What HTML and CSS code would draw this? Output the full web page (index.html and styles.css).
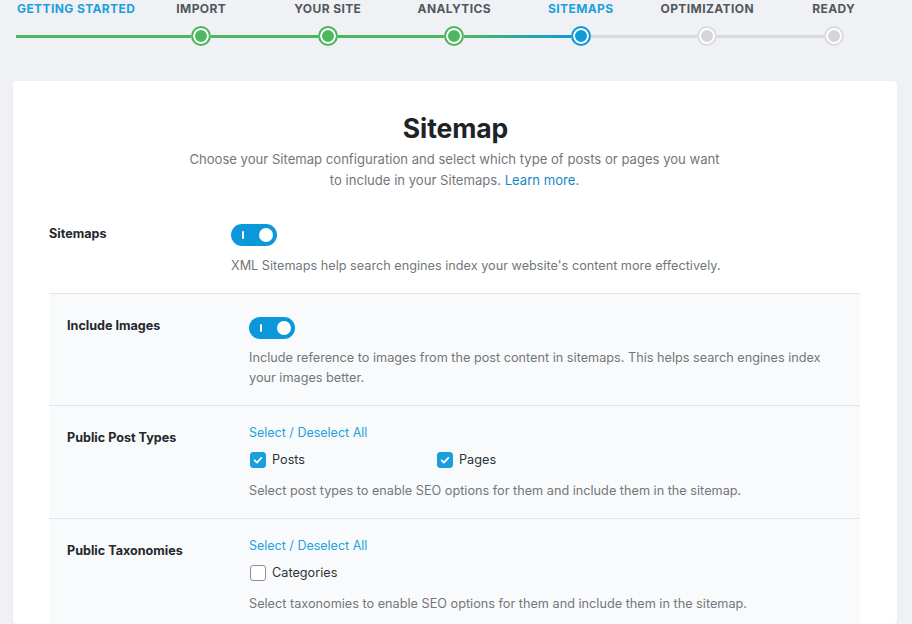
FILE: index.html
```html
<!DOCTYPE html>
<html lang="en">
<head>
<meta charset="utf-8">
<title>Sitemap setup</title>
<link rel="stylesheet" href="styles.css">
</head>
<body>
<nav class="stepper">
  <div class="step-row labels">
    <span class="step-label first active">Getting Started</span>
    <span class="step-label">Import</span>
    <span class="step-label">Your Site</span>
    <span class="step-label">Analytics</span>
    <span class="step-label active">Sitemaps</span>
    <span class="step-label">Optimization</span>
    <span class="step-label">Ready</span>
  </div>
  <div class="step-row track">
    <div class="cell"><span class="seg green"></span></div>
    <div class="cell"><span class="seg green"></span><span class="dot done"></span><span class="seg green"></span></div>
    <div class="cell"><span class="seg green"></span><span class="dot done"></span><span class="seg green"></span></div>
    <div class="cell"><span class="seg green"></span><span class="dot done"></span><span class="seg grad1"></span></div>
    <div class="cell"><span class="seg grad2"></span><span class="dot current"></span><span class="seg grey"></span></div>
    <div class="cell"><span class="seg grey"></span><span class="dot todo"></span><span class="seg grey"></span></div>
    <div class="cell"><span class="seg grey"></span><span class="dot todo"></span><span class="seg none"></span></div>
  </div>
</nav>

<main class="card">
  <h1 class="title">Sitemap</h1>
  <p class="intro">Choose your Sitemap configuration and select which type of posts or pages you want<br>to include in your Sitemaps. <a href="#" class="learn">Learn more.</a></p>

  <div class="row top-row">
    <div class="label">Sitemaps</div>
    <div class="value">
      <span class="toggle"><span class="bar"></span><span class="knob"></span></span>
      <p class="desc">XML Sitemaps help search engines index your website's content more effectively.</p>
    </div>
  </div>

  <section class="panel">
    <div class="row">
      <div class="label">Include Images</div>
      <div class="value">
        <span class="toggle"><span class="bar"></span><span class="knob"></span></span>
        <p class="desc">Include reference to images from the post content in sitemaps. This helps search engines index your images better.</p>
      </div>
    </div>
    <div class="row">
      <div class="label">Public Post Types</div>
      <div class="value">
        <a href="#" class="select-all">Select / Deselect All</a>
        <div class="checks">
          <label class="check"><span class="box on"><svg viewBox="0 0 16 16" width="16" height="16"><path d="M4.2 8.3l2.6 2.6 5-5.4" fill="none" stroke="#fff" stroke-width="2" stroke-linecap="round" stroke-linejoin="round"/></svg></span>Posts</label>
          <label class="check"><span class="box on"><svg viewBox="0 0 16 16" width="16" height="16"><path d="M4.2 8.3l2.6 2.6 5-5.4" fill="none" stroke="#fff" stroke-width="2" stroke-linecap="round" stroke-linejoin="round"/></svg></span>Pages</label>
        </div>
        <p class="desc">Select post types to enable SEO options for them and include them in the sitemap.</p>
      </div>
    </div>
    <div class="row">
      <div class="label">Public Taxonomies</div>
      <div class="value">
        <a href="#" class="select-all">Select / Deselect All</a>
        <div class="checks">
          <label class="check"><span class="box"></span>Categories</label>
        </div>
        <p class="desc">Select taxonomies to enable SEO options for them and include them in the sitemap.</p>
      </div>
    </div>
  </section>
</main>
</body>
</html>
```

FILE: styles.css
```css
* { box-sizing: border-box; }

html, body {
  margin: 0;
  padding: 0;
}

body {
  background: #f0f1f4;
  font-family: "Inter", "Noto Sans", sans-serif;
  color: #1d2327;
  height: 624px;
  overflow: hidden;
}

.stepper {
  padding: 1px 0 0 16px;
}

.step-row {
  display: grid;
  grid-template-columns: 122px repeat(6, 126.5px);
}

.step-label {
  font-size: 12px;
  font-weight: 700;
  letter-spacing: 0.4px;
  text-transform: uppercase;
  color: #50575e;
  text-align: center;
  line-height: 16px;
}

.step-label.first { text-align: left; padding-left: 1px; }
.step-label.active { color: #1ba0dd; }

.track {
  margin-top: 9px;
  height: 20px;
}

.cell {
  display: flex;
  align-items: center;
}

.seg {
  flex: 1;
  height: 3px;
}

.seg.green { background: #4db85f; }
.seg.grey { background: #d8dadd; }
.seg.none { background: transparent; }
.seg.grad1 { background: linear-gradient(90deg, #4db85f, #2aa9a0); }
.seg.grad2 { background: linear-gradient(90deg, #2aa9a0, #0f9ad8); }

.dot {
  width: 20px;
  height: 20px;
  border-radius: 50%;
  border: 2px solid #4db85f;
  box-shadow: inset 0 0 0 2px #fff;
  flex: none;
}

.dot.done { background: #4db85f; }
.dot.current { background: #0f9ad8; border-color: #0f9ad8; }
.dot.todo { background: #d3d5d8; border-color: #dcdee1; }

.card {
  margin: 35px 15px 0 13px;
  background: #fff;
  border-radius: 4px;
  box-shadow: 0 1px 3px rgba(0, 0, 0, 0.04);
  padding: 31px 37px 0 36px;
  height: 543px;
  overflow: hidden;
}

.title {
  margin: 0;
  font-size: 26.5px;
  line-height: 32px;
  font-weight: 700;
  text-align: center;
  color: #1d2327;
  letter-spacing: -0.1px;
  padding-left: 2px;
}

.intro {
  margin: 5px 0 0;
  font-size: 13.1px;
  line-height: 21px;
  text-align: center;
  color: #72777c;
}

.learn {
  color: #1a87c4;
  text-decoration: none;
}

.row {
  display: grid;
  grid-template-columns: 182px 1fr;
  padding: 17px 0 17px;
}

.top-row {
  margin-top: 27px;
  padding-top: 0;
}

.label {
  margin-top: 5px;
  font-size: 12.6px;
  line-height: 20px;
  font-weight: 700;
  color: #23282d;
}

.top-row .label { margin-top: 6px; }

.value {
  display: flex;
  flex-direction: column;
  align-items: flex-start;
}

.toggle {
  margin-top: 6px;
  width: 46px;
  height: 22px;
  border-radius: 11px;
  background: #0b98da;
  display: flex;
  align-items: center;
  justify-content: space-between;
  padding: 0 4px 0 11px;
}

.toggle .bar {
  width: 2px;
  height: 8px;
  background: #fff;
  border-radius: 1px;
}

.toggle .knob {
  width: 14px;
  height: 14px;
  border-radius: 50%;
  background: #fff;
}

.desc {
  margin: 9px 0 0;
  font-size: 12.7px;
  line-height: 20px;
  color: #72777c;
  max-width: 590px;
}

.top-row .desc { margin-top: 10px; }

.panel {
  background: #f9fafb;
  border-top: 1px solid #e2e4e7;
}

.panel .row {
  padding-left: 18px;
  border-bottom: 1px solid #e2e4e7;
}

.select-all {
  font-size: 12.5px;
  line-height: 20px;
  color: #1ba3de;
  text-decoration: none;
}

.checks {
  display: grid;
  grid-template-columns: 187px 187px;
  margin-top: 7px;
}

.check {
  display: flex;
  align-items: center;
  gap: 6px;
  font-size: 12.7px;
  line-height: 20px;
  color: #2c3338;
}

.box {
  width: 16px;
  height: 16px;
  margin-left: 1px;
  border-radius: 3px;
  border: 1px solid #8c8f94;
  background: #fff;
  display: flex;
  align-items: center;
  justify-content: center;
}

.box.on {
  background: #1a9fdc;
  border-color: #1a9fdc;
}

.box svg { display: block; }

.value .checks + .desc { margin-top: 11px; }
```
